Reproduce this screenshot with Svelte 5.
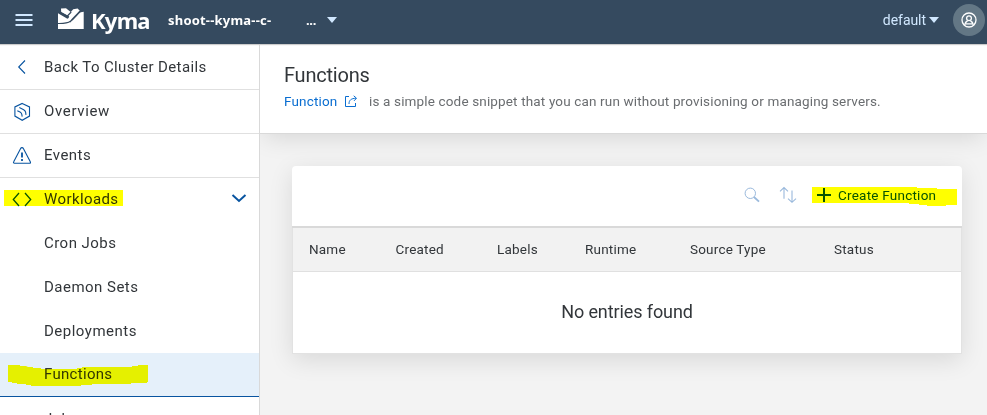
<script>
  const children = [
    { label: 'Cron Jobs', spacing: 0.46 },
    { label: 'Daemon Sets', spacing: 0.48 },
    { label: 'Deployments', spacing: 0.5 },
    { label: 'Functions', spacing: 0.3, active: true },
    { label: 'Jobs', spacing: 0.3 }
  ];
  const columns = [
    { label: 'Name', width: 86.5 },
    { label: 'Created', width: 101.5 },
    { label: 'Labels', width: 88 },
    { label: 'Runtime', width: 105 },
    { label: 'Source Type', width: 144 },
    { label: 'Status', width: 120 }
  ];
</script>

<div class="app">
  <header>
    <svg class="menu" width="18" height="14" viewBox="0 0 18 14"><path d="M.5 2h17M.5 7h17M.5 12h17" stroke="#d1e8ff" stroke-width="2" /></svg>
    <svg class="logo" width="26" height="22" viewBox="0 0 26 22">
      <path fill="#fff" d="M0 5.3 9.4 10.8 18.6 5l7.1-1.3V21H0Z" />
      <path fill="#fff" d="M3 .5 8 .2l5.3 4.2-3.8 3L3.2 4Z" />
      <path fill="#fff" d="m10 7.3 5.2-6 4.4-.8 2.2 2.3-6 6.4-4.5 2Z" />
      <path fill="none" stroke="#354a5f" stroke-width="1.2" d="M2 4.2 11 9M13.2 4 9.4 8M22 3.2 14.5 11 12 14M0 15.5c6 .1 10-.3 12.4-2.2C16.7 10.2 18 7.5 22.5 3.2" />
    </svg>
    <span class="brand">Kyma</span>
    <span class="cluster">shoot--kyma--c-</span>
    <span class="dots">...</span>
    <i class="caret"></i>
    <span class="namespace">default</span>
    <i class="caret small"></i>
    <span class="avatar">
      <svg width="16" height="16" viewBox="0 0 16 16" fill="none" stroke="#fff" stroke-width="1.3"><circle cx="8" cy="8" r="7" /><circle cx="8" cy="6.2" r="2.4" /><path d="M3.8 13.2c.2-2.6 1.4-3.8 2.8-4.4M12.2 13.2c-.2-2.6-1.4-3.8-2.8-4.4M5 11.8h6" /></svg>
    </span>
  </header>

  <div class="body">
    <nav>
      <a class="row line first">
        <svg width="20" height="20" viewBox="0 0 20 20"><path d="M13 3.5 6.7 10l6.3 6.5" /></svg>
        <span style:letter-spacing="0.38px">Back To Cluster Details</span>
      </a>
      <a class="row line">
        <svg width="20" height="20" viewBox="0 0 20 20"><path d="m10.2 2.4 7.3 3.5v9.2l-7.3 4.2-7.3-4.2V5.9Z" /><path d="M5.3 9.7 8 10.9c1.1.6 1.6 1.3 1.8 2.4l.4 2.4M7.3 6.6l4.4 2.1c1.1.6 1.7 1.3 1.9 2.5l.4 2.6" /></svg>
        <span style:letter-spacing="0.65px">Overview</span>
      </a>
      <a class="row line">
        <svg width="20" height="20" viewBox="0 0 20 20"><path d="M10 2.6c.8 0 1.2.5 1.5 1.1l6.8 13c.5 1 .1 1.6-.8 1.6h-15c-1 0-1.3-.7-.8-1.6l6.8-13c.3-.6.7-1.1 1.5-1.1Z" /><path d="M10 7.5v5M10 14v2" stroke-width="1.8" /></svg>
        <span style:letter-spacing="0.45px">Events</span>
      </a>
      <a class="row parent">
        <svg width="20" height="20" viewBox="0 0 20 20"><path d="M7 4 1.3 10.5 7 17M13 4l5.7 6.5L13 17" stroke-width="1.3" /></svg>
        <span style:letter-spacing="0.4px">Workloads</span>
        <svg class="chevron" width="16" height="12" viewBox="0 0 16 12"><path d="m1.5 2 6.5 6 6.5-6" stroke-width="2" /></svg>
      </a>
      {#each children as item}
        <a class="row child" class:active={item.active}>
          <span style:letter-spacing="{item.spacing}px">{item.label}</span>
        </a>
      {/each}
    </nav>

    <main>
      <section class="heading">
        <h1>Functions</h1>
        <p>
          <a>Function</a>
          <svg width="14" height="13" viewBox="0 0 14 13" fill="none" stroke="#0a6ed1"><path d="M5 1.5H1.5v10h10V8" /><path d="M5 9c0-4 2.2-5.5 7-5.8M9.7.8l2.8 2.4-2.5 2.7" /></svg>
          <span>is a simple code snippet that you can run without provisioning or managing servers.</span>
        </p>
      </section>

      <section class="panel">
        <div class="toolbar">
          <svg width="16" height="16" viewBox="0 0 16 16" fill="none" stroke="#9ab9dc"><circle cx="6.3" cy="6.3" r="5.2" /><path d="m10 10 5 4.7" stroke-width="1.8" /></svg>
          <svg class="sort" width="18" height="18" viewBox="0 0 18 18" fill="none" stroke="#9ab9dc" stroke-width="1.1"><path d="M5 12.8V1.5M1 5.3l4-3.8 4 3.8M13 4.5v11.7M9 12.7l4 3.6 4-3.6" /></svg>
          <svg class="plus" width="14" height="14" viewBox="0 0 14 14"><path d="M7 0v14M0 7h14" stroke="#0854a0" stroke-width="2" /></svg>
          <span class="create">Create Function</span>
        </div>
        <div class="table">
          <div class="thead">
            {#each columns as col}<span style:width="{col.width}px">{col.label}</span>{/each}
          </div>
          <div class="empty">No entries found</div>
        </div>
      </section>
    </main>
  </div>

  <svg class="marks" width="987" height="415" viewBox="0 0 987 415" fill="#ff0">
    <path d="M4 190H123v16H4Z" />
    <path d="M8 365h12v1h6l2 1h5v1h8v1h36v-1h5v-1h50v-1h6v-1h10v17h-1v1h-16v1H92v1H81v1H31v-1h-5v-1h-9v-1h-5v-1H8Z" />
    <path d="M812 187h105v1h20v1h20v16h-11v1h-19v-1h-8v-1h-10v-1H812Z" />
  </svg>
</div>

<style>
  :global(body) { margin: 0; overflow: hidden; }
  .app { position: relative; isolation: isolate; width: 987px; height: 415px; overflow: hidden; background: #f3f3f3; font-family: Roboto, sans-serif; color: #32363a; }
  header { display: flex; align-items: center; box-sizing: border-box; height: 44px; padding: 0 2px 4px 15px; background: #354a5f; box-shadow: 0 1px 1px #ccc; position: relative; z-index: 2; }
  header svg { display: block; flex: none; }
  .logo { margin: -2px 0 0 25px; }
  .brand { margin-left: 7px; width: 76px; color: #fff; font: bold 22px/28px "Noto Sans", sans-serif; letter-spacing: -.75px; }
  .cluster { margin-left: 1px; width: 138px; font: bold 13px/20px "Noto Sans", sans-serif; letter-spacing: .2px; color: #fff; }
  .dots { width: 21px; font: bold 13px/20px "Noto Sans", sans-serif; letter-spacing: -.3px; color: #fff; }
  .caret { border: 5px solid transparent; border-top: 6px solid #d1e8ff; border-bottom: 0; }
  .namespace { margin-left: auto; font-size: 14px; line-height: 20px; letter-spacing: -.05px; color: #d1e8ff; }
  .caret.small { margin: 0 14px 0 3px; }
  .avatar { display: grid; place-items: center; width: 32px; height: 32px; border-radius: 50%; background: #637785; }
  .body { display: flex; height: 371px; }
  nav { position: relative; z-index: 1; box-sizing: border-box; width: 260px; flex: none; padding-top: 1px; overflow: hidden; background: #fff; border-right: 1px solid #d9d9d9; }
  .row { display: flex; align-items: center; box-sizing: border-box; height: 44px; padding: 0 12px; font-size: 15px; line-height: 20px; }
  .row.line { padding-bottom: 1px; border-bottom: 1px solid #e0e0e0; }
  .row.first { height: 45px; padding-bottom: 0; }
  .row svg { margin-right: 12px; flex: none; fill: none; stroke: #0854a0; stroke-width: 1.1; }
  .row .chevron { margin: 0 0 0 auto; }
  .row.parent { height: 43px; padding-bottom: 1px; }
  .row.child { padding-left: 44px; }
  .row.active { padding-bottom: 1px; background: #e5f0fa; border-bottom: 1px solid #0854a0; }
  main { flex: 1; min-width: 0; }
  .heading { box-sizing: border-box; height: 90px; padding: 18px 24px 0; background: #fff; border-bottom: 1px solid #d9d9d9; box-shadow: 0 6px 24px -4px #0002; }
  h1 { margin: 0; font-size: 20px; font-weight: 400; line-height: 26px; letter-spacing: -.22px; }
  p { display: flex; align-items: center; margin: 3px 0 0; font-size: 13.5px; line-height: 20px; letter-spacing: .15px; color: #6a6d70; white-space: nowrap; }
  p a { color: #0a6ed1; width: 60px; }
  p span { margin-left: 11px; }
  .panel { margin: 32px 25px 0 32px; border-radius: 4px 4px 0 0; box-shadow: 0 6px 24px #0000001c; background: #fff; position: relative; }
  .toolbar { box-sizing: border-box; height: 62px; display: flex; align-items: center; justify-content: flex-end; padding: 0 26px 2px; border-bottom: 2px solid #d9d9d9; }
  .sort { margin-left: 19px; }
  .plus { margin-left: 20px; }
  .create { margin-left: 7px; width: 98px; font-size: 13.5px; letter-spacing: .23px; color: #0854a0; white-space: nowrap; }
  .table { border: 1px solid #e2e2e2; border-top: 0; }
  .thead { box-sizing: border-box; height: 44px; display: flex; align-items: center; padding: 0 0 2px 16px; background: #f2f2f2; border-bottom: 1px solid #e0e0e0; font-size: 13.5px; letter-spacing: .2px; }
  .thead span { flex: none; }
  .empty { height: 81px; line-height: 80px; text-align: center; font-size: 18px; letter-spacing: -.1px; }
  .marks { position: absolute; inset: 0; z-index: 3; mix-blend-mode: multiply; pointer-events: none; }
</style>
